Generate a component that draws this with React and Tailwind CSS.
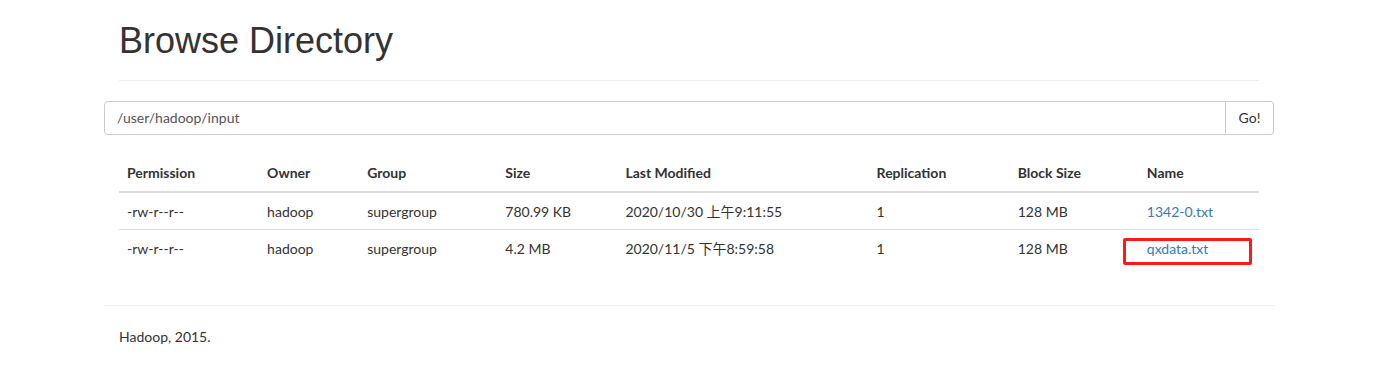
const rows = [
  {
    permission: "-rw-r--r--",
    owner: "hadoop",
    group: "supergroup",
    size: "780.99 KB",
    modified: "2020/10/30 上午9:11:55",
    replication: "1",
    blockSize: "128 MB",
    name: "1342-0.txt",
  },
  {
    permission: "-rw-r--r--",
    owner: "hadoop",
    group: "supergroup",
    size: "4.2 MB",
    modified: "2020/11/5 下午8:59:58",
    replication: "1",
    blockSize: "128 MB",
    name: "qxdata.txt",
    marked: true,
  },
];

const columns = [
  { label: "Permission", key: "permission", width: "w-[140px]" },
  { label: "Owner", key: "owner", width: "w-[100px]" },
  { label: "Group", key: "group", width: "w-[138px]" },
  { label: "Size", key: "size", width: "w-[120px]" },
  { label: "Last Modified", key: "modified", width: "w-[251px]" },
  { label: "Replication", key: "replication", width: "w-[141px]" },
  { label: "Block Size", key: "blockSize", width: "w-[129px]" },
  { label: "Name", key: "name", width: "w-[120px]" },
];

const bodyFont = {
  fontFamily: '"Lato", "Noto Sans CJK SC", sans-serif',
};

const App = () => {
  return (
    <div
      className="min-h-[390px] bg-white text-[14px] leading-[20px] text-[#333]"
      style={bodyFont}
    >
      <div className="ml-[104px] w-[1170px]">
        {/* Page header */}
        <div className="mx-[15px] mb-[20px] border-b border-[#eee] pb-[9px] pt-[21px]">
          <h1 className="mb-[10px] font-['Liberation_Sans',Arial,sans-serif] text-[36px] leading-[39.6px] text-[#333]">
            Browse Directory
          </h1>
        </div>

        {/* Path form */}
        <div className="flex h-[34px]">
          <input
            defaultValue="/user/hadoop/input"
            className="h-[34px] flex-1 rounded-l-[4px] border border-[#ccc] px-[12px] text-[14px] text-[#555] outline-none"
            style={bodyFont}
          />
          <button className="h-[34px] w-[48px] rounded-r-[4px] border border-l-0 border-[#ccc] bg-white text-[14px] text-[#333]">
            Go!
          </button>
        </div>

        {/* Listing */}
        <div className="mx-[15px] mt-[20px]">
          <table className="w-[1140px] table-fixed border-collapse">
            <thead>
              <tr className="border-b-2 border-[#ddd]">
                {columns.map((col) => (
                  <th
                    key={col.key}
                    className={`${col.width} p-[8px] text-left font-bold`}
                  >
                    {col.label}
                  </th>
                ))}
              </tr>
            </thead>
            <tbody>
              {rows.map((row, i) => (
                <tr
                  key={row.name}
                  className={i > 0 ? "border-t border-[#ddd]" : ""}
                >
                  {columns.map((col) => (
                    <td key={col.key} className="px-[8px] pb-[7px] pt-[9px] align-top">
                      {col.key === "name" ? (
                        <div className="relative">
                          <a href="#" className="text-[#337ab7]">
                            {row.name}
                          </a>
                          {row.marked && (
                            <span className="absolute left-[-24px] top-[-1px] h-[27px] w-[129px] rounded-[2px] border-[3px] border-[#ff1a1a]" />
                          )}
                        </div>
                      ) : (
                        row[col.key]
                      )}
                    </td>
                  ))}
                </tr>
              ))}
            </tbody>
          </table>
        </div>

        {/* Footer */}
        <div className="mt-[39px] border-t border-[#eee] pt-[21px]">
          <p className="mx-[15px]">Hadoop, 2015.</p>
        </div>
      </div>
    </div>
  );
};

export default App;
